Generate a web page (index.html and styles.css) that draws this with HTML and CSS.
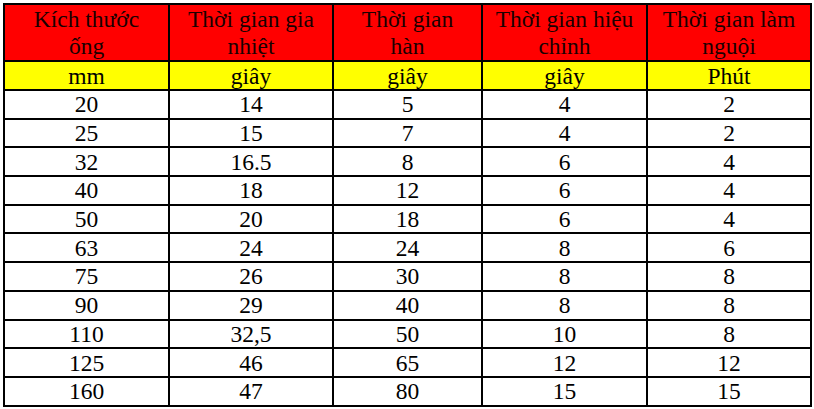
FILE: index.html
```html
<!DOCTYPE html>
<html lang="vi">
<head>
<meta charset="utf-8">
<title>Bảng thời gian hàn</title>
<link rel="stylesheet" href="styles.css">
</head>
<body>
<table class="spec">
  <colgroup>
    <col class="c1"><col class="c2"><col class="c3"><col class="c4"><col class="c5">
  </colgroup>
  <thead>
    <tr class="head">
      <th>Kích thước ống</th>
      <th>Thời gian gia nhiệt</th>
      <th>Thời gian hàn</th>
      <th>Thời gian hiệu chỉnh</th>
      <th>Thời gian làm nguội</th>
    </tr>
    <tr class="units">
      <th>mm</th>
      <th>giây</th>
      <th>giây</th>
      <th>giây</th>
      <th>Phút</th>
    </tr>
  </thead>
  <tbody>
    <tr><td>20</td><td>14</td><td>5</td><td>4</td><td>2</td></tr>
    <tr><td>25</td><td>15</td><td>7</td><td>4</td><td>2</td></tr>
    <tr><td>32</td><td>16.5</td><td>8</td><td>6</td><td>4</td></tr>
    <tr><td>40</td><td>18</td><td>12</td><td>6</td><td>4</td></tr>
    <tr><td>50</td><td>20</td><td>18</td><td>6</td><td>4</td></tr>
    <tr><td>63</td><td>24</td><td>24</td><td>8</td><td>6</td></tr>
    <tr><td>75</td><td>26</td><td>30</td><td>8</td><td>8</td></tr>
    <tr><td>90</td><td>29</td><td>40</td><td>8</td><td>8</td></tr>
    <tr><td>110</td><td>32,5</td><td>50</td><td>10</td><td>8</td></tr>
    <tr><td>125</td><td>46</td><td>65</td><td>12</td><td>12</td></tr>
    <tr><td>160</td><td>47</td><td>80</td><td>15</td><td>15</td></tr>
  </tbody>
</table>
</body>
</html>
```

FILE: styles.css
```css
html, body {
  margin: 0;
  padding: 0;
  background: #ffffff;
}

body {
  padding: 3px;
  font-family: "Liberation Serif", "Times New Roman", serif;
  color: #000;
}

.spec {
  border-collapse: collapse;
  table-layout: fixed;
  width: 807px;
  font-family: "Liberation Serif", "Times New Roman", serif;
  font-size: 23.5px;
}

.c1 { width: 165px; }
.c2 { width: 164px; }
.c3 { width: 149px; }
.c4 { width: 165px; }
.c5 { width: 164px; }

.spec th,
.spec td {
  border: 2px solid #000;
  padding: 0 10px;
  text-align: center;
  vertical-align: middle;
  font-family: "Liberation Serif", "Times New Roman", serif;
  font-size: 23.5px;
  font-weight: normal;
  line-height: 24px;
  color: #000;
}

.head th {
  background: #ff0000;
  line-height: 27px;
  color: #1a0000;
}

.head {
  height: 57px;
}

.units th {
  background: #ffff00;
}

.units {
  height: 29px;
}

.spec tbody tr {
  height: 28.7px;
}
```
